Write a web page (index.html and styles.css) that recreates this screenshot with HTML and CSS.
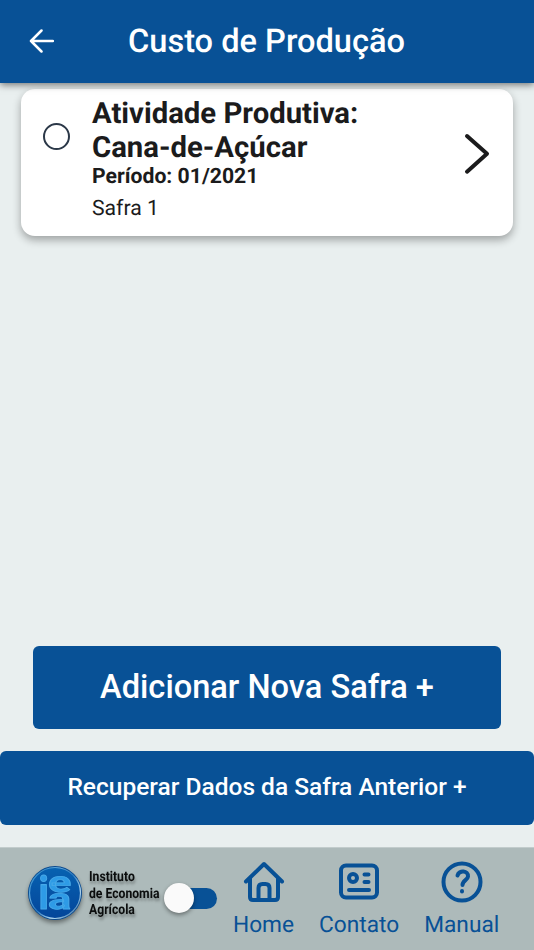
FILE: index.html
```html
<!DOCTYPE html>
<html lang="pt-BR">
<head>
<meta charset="utf-8">
<title>Custo de Produção</title>
<link rel="stylesheet" href="styles.css">
</head>
<body>
<div class="app">
  <header class="header">
    <svg class="back" viewBox="0 0 26 26"><path d="M25 13H3M13.500 2.500L3 13l10.500 10.500"/></svg>
    <h1 class="title">Custo de Produção</h1>
  </header>
  <main class="content">
    <article class="card">
      <span class="radio"></span>
      <div class="info">
        <h2 class="name">Atividade Produtiva:<br>Cana-de-Açúcar</h2>
        <p class="period">Período: 01/2021</p>
        <p class="crop">Safra 1</p>
      </div>
      <svg class="chevron" viewBox="0 0 26 42"><path d="M3 3l20 17.800L3 38.700"/></svg>
    </article>
    <div class="actions">
      <button class="btn primary"><span>Adicionar Nova Safra +</span></button>
      <button class="btn wide"><span>Recuperar Dados da Safra Anterior +</span></button>
    </div>
  </main>
  <footer class="footer">
    <div class="brand">
      <svg class="seal" viewBox="0 0 56 56">
        <defs>
          <linearGradient id="rim" x1="0" y1="0" x2="1" y2="1"><stop offset="0" stop-color="#0873bd"/><stop offset=".3" stop-color="#6aaedd"/><stop offset=".5" stop-color="#2a78bd"/><stop offset=".72" stop-color="#b7dcf3"/><stop offset="1" stop-color="#064889"/></linearGradient>
          <linearGradient id="face" x1="0" y1="0" x2="0" y2="1"><stop offset="0" stop-color="#0762b1"/><stop offset="1" stop-color="#04459a"/></linearGradient>
        </defs>
        <circle cx="28" cy="28" r="27" fill="#07488f"/>
        <circle cx="28" cy="28" r="25.500" fill="url(#face)" stroke="url(#rim)" stroke-width="1.200"/>
        <g class="monogram">
          <text transform="translate(11.500 44) scale(1.300 1.540)" font-size="30">i</text>
          <text transform="translate(21 26.500) scale(1.600 1.080)" font-size="27">e</text>
          <text transform="translate(21 44) scale(1.600 1.080)" font-size="27">a</text>
        </g>
      </svg>
      <div class="brand-name"><span>Instituto</span><span>de Economia</span><span>Agrícola</span></div>
    </div>
    <span class="switch"><span class="knob"></span></span>
    <nav class="nav">
      <a class="item home">
        <svg viewBox="0 0 42 42"><path d="M3 20.500L21 3l18 17.500M7 17v19q0 3 3 3h22q3 0 3-3V17M15.500 38V27q0-4 4-4h3q4 0 4 4v11"/></svg>
        <span>Home</span>
      </a>
      <a class="item contact">
        <svg viewBox="0 0 42 42"><rect x="3" y="4.500" width="36" height="32" rx="5"/><circle cx="15" cy="17" r="4"/><path d="M26.500 13.500h4M26.500 21h4M11 29h20"/></svg>
        <span>Contato</span>
      </a>
      <a class="item manual">
        <svg viewBox="0 0 42 42"><circle cx="21" cy="21" r="18.500"/><path d="M16.500 14.500C18 8.500 27.500 9.500 27 15.500c-.3 3.500-5.500 4-5.500 8.500M21 30v.5"/></svg>
        <span>Manual</span>
      </a>
    </nav>
  </footer>
</div>
</body>
</html>
```
FILE: styles.css
```css
* { box-sizing: border-box; }
body { margin: 0; font-family: Roboto, "Liberation Sans", sans-serif; color: #1b1b1c; text-rendering: geometricPrecision; }
h1, h2, p { margin: 0; }
svg { display: block; fill: none; stroke-linecap: round; stroke-linejoin: round; }
.app { width: 534px; height: 950px; display: flex; flex-direction: column; background: #e9efef; overflow: hidden; }
.header { height: 83px; flex: none; display: flex; align-items: center; background: #085196; color: #fff; box-shadow: 0 2px 7px rgba(0,0,0,.5); z-index: 1; }
.back { width: 26px; height: 26px; margin: -1px 0 0 28px; stroke: #fff; stroke-width: 2.5; }
.title { margin: -2px 0 0 74px; font-size: 32.6px; line-height: 40px; font-weight: 500; white-space: nowrap; }
.content { flex: 1; display: flex; flex-direction: column; padding-top: 6px; }
.card { margin: 0 21px; height: 147px; display: flex; background: #fff; border-radius: 14px; box-shadow: 0 4px 8px rgba(0,0,0,.32); }
.radio { width: 27px; height: 27px; margin: 34px 0 0 22px; border: 2px solid #2b3848; border-radius: 50%; }
.info { margin-left: 22px; padding-top: 8px; flex: 1; }
.name { font-size: 29.3px; line-height: 34px; font-weight: 700; }
.period { margin-top: -1px; font-size: 21.2px; line-height: 25px; font-weight: 700; }
.crop { margin-top: 7px; font-size: 21.2px; line-height: 25px; }
.chevron { width: 26px; height: 42px; margin: 44px 23px 0 0; stroke: #1b1b1c; stroke-width: 4; }
.actions { margin-top: auto; display: flex; flex-direction: column; gap: 22px; padding-bottom: 22px; }
.btn { border: 0; padding: 0 0 2px; font-family: inherit; font-weight: 500; color: #fff; background: #085196; border-radius: 6px; white-space: nowrap; }
.primary { margin: 0 33px; height: 83px; font-size: 32.6px; }
.wide { height: 74px; padding-bottom: 3px; font-size: 24.5px; }
.footer { height: 103px; flex: none; display: flex; background: #adbaba; border-top: 1px solid #c2cccc; }
.brand { display: flex; width: 164px; padding-left: 27px; }
.seal { width: 56px; height: 56px; margin-top: 17px; flex: none; filter: drop-shadow(0 3px 2px rgba(0,0,0,.4)); }
.monogram { fill: #2e9be6; stroke: #47a9e8; stroke-width: .7; font-family: Roboto, sans-serif; font-weight: 700; }
.brand-name { display: flex; flex-direction: column; margin: 21px 0 0 6px; font-size: 14px; line-height: 16.500px; font-weight: 700; color: #0b0d0d; white-space: nowrap; transform: scaleX(.87); transform-origin: 0 0; text-shadow: 1px 3px 3px rgba(0,0,0,.3); }
.switch { width: 49px; height: 21px; margin: 40px 0 0 4px; flex: none; border-radius: 11px; background: #085196; }
.knob { display: block; width: 30px; height: 30px; margin: -5px 0 0 -4px; border-radius: 50%; background: #fafafa; box-shadow: 0 2px 4px rgba(0,0,0,.4); }
.nav { display: flex; margin-left: 16px; gap: 25px; }
.item { display: flex; flex-direction: column; align-items: center; padding-top: 13px; color: #085196; font-size: 22.7px; line-height: 28px; }
.item svg { width: 42px; height: 42px; margin-bottom: 8px; stroke: currentColor; stroke-width: 4; }
```
